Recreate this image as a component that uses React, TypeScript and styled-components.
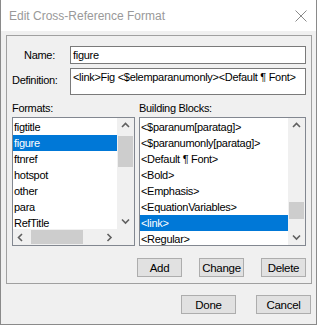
import React from "react";
import styled, { createGlobalStyle } from "styled-components";

const GlobalStyle = createGlobalStyle`
  html, body {
    margin: 0;
    padding: 0;
    background: #ffffff;
  }
  body {
    font-family: "Liberation Sans", Arial, sans-serif;
    font-size: 11px;
    letter-spacing: -0.3px;
    color: #000;
  }
`;

const formats = ["figtitle", "figure", "ftnref", "hotspot", "other", "para", "RefTitle"];
const blocks = [
  "<$paranum[paratag]>",
  "<$paranumonly[paratag]>",
  "<Default ¶ Font>",
  "<Bold>",
  "<Emphasis>",
  "<EquationVariables>",
  "<link>",
  "<Regular>"
];

const Window = styled.div`
  width: 317px;
  height: 325px;
  box-sizing: border-box;
  border: 1px solid #8a8a8a;
  border-top: none;
  display: flex;
  flex-direction: column;
  background: #f0f0f0;
`;

const TitleBar = styled.div`
  height: 31px;
  flex: none;
  background: #ffffff;
  display: flex;
  align-items: center;
  justify-content: space-between;
  padding: 0 9px 0 8px;
  font-size: 12px;
  letter-spacing: 0;
  color: #999999;
`;

const Body = styled.div`
  flex: 1;
  display: flex;
  flex-direction: column;
  padding: 4px 4px 0 5px;
`;

const GroupBox = styled.div`
  border: 1px solid #a0a0a0;
  height: 249px;
  box-sizing: border-box;
  padding: 10px 5px 0 5px;
  display: flex;
  flex-direction: column;
`;

const FieldRow = styled.div<{ $top?: number }>`
  display: flex;
  align-items: flex-start;
  margin-top: ${p => p.$top ?? 0}px;
`;

const FieldLabel = styled.div<{ $indent?: number }>`
  width: 58px;
  flex: none;
  box-sizing: border-box;
  padding-left: ${p => p.$indent ?? 0}px;
  line-height: 18px;
  padding-top: ${p => (p.$indent ? 0 : 3)}px;
`;

const TextBox = styled.div<{ $h: number }>`
  flex: 1;
  height: ${p => p.$h}px;
  box-sizing: border-box;
  border: 1px solid #7a7a7a;
  background: #ffffff;
  padding: 2px 0 0 2px;
  line-height: 13px;
  white-space: nowrap;
  overflow: hidden;
`;

const Lists = styled.div`
  display: grid;
  grid-template-columns: 123px 167px;
  column-gap: 4px;
  margin-top: 6px;
`;

const ListColumn = styled.div`
  display: flex;
  flex-direction: column;
`;

const ListCaption = styled.div`
  height: 16px;
  line-height: 14px;
`;

const ListBox = styled.div`
  height: 129px;
  box-sizing: border-box;
  border: 1px solid #828790;
  background: #ffffff;
  display: grid;
  grid-template-columns: 1fr 17px;
  grid-template-rows: 1fr auto;
  overflow: hidden;
`;

const Items = styled.div`
  padding-top: 1px;
  overflow: hidden;
`;

const Item = styled.div<{ $selected?: boolean }>`
  height: 16px;
  line-height: 16px;
  padding-left: 1px;
  white-space: nowrap;
  background: ${p => (p.$selected ? "#0078d7" : "transparent")};
  color: ${p => (p.$selected ? "#ffffff" : "#000000")};
`;

const VScroll = styled.div<{ $thumbTop: number; $thumbH: number }>`
  background: #f0f0f0;
  position: relative;
  display: flex;
  flex-direction: column;
  justify-content: space-between;
  align-items: center;
  padding: 4px 0;
  &::after {
    content: "";
    position: absolute;
    left: 1px;
    right: 1px;
    top: ${p => p.$thumbTop}px;
    height: ${p => p.$thumbH}px;
    background: #cdcdcd;
  }
`;

const HScroll = styled.div`
  grid-column: 1 / 2;
  height: 16px;
  background: #f0f0f0;
  position: relative;
  display: flex;
  justify-content: space-between;
  align-items: center;
  padding: 0 4px;
  &::after {
    content: "";
    position: absolute;
    left: 18px;
    width: 52px;
    top: 1px;
    bottom: 1px;
    background: #cdcdcd;
  }
`;

const Corner = styled.div`
  background: #f0f0f0;
`;

const ButtonRow = styled.div<{ $gap: number; $top: number }>`
  display: flex;
  justify-content: flex-end;
  gap: ${p => p.$gap}px;
  margin-top: ${p => p.$top}px;
`;

const Button = styled.div`
  width: 45px;
  height: 19px;
  box-sizing: border-box;
  border: 1px solid #adadad;
  background: #e1e1e1;
  font-size: 11.5px;
  display: flex;
  align-items: center;
  justify-content: center;
`;

const WideButton = styled(Button)`
  width: 55px;
`;

const Footer = styled(ButtonRow)`
  padding-right: 1px;
`;

const Chevron = ({ dir }: { dir: "up" | "down" | "left" | "right" }) => {
  const d = {
    up: "M1 5 L4.5 1.5 L8 5",
    down: "M1 1.5 L4.5 5 L8 1.5",
    left: "M5 1 L1.5 4.5 L5 8",
    right: "M1.5 1 L5 4.5 L1.5 8"
  }[dir];
  const w = dir === "up" || dir === "down" ? 9 : 7;
  const h = dir === "up" || dir === "down" ? 7 : 9;
  return (
    <svg width={w} height={h} viewBox={`0 0 ${w} ${h}`} style={{ position: "relative", zIndex: 1 }}>
      <path d={d} fill="none" stroke="#606060" strokeWidth="1.6" />
    </svg>
  );
};

export default function App() {
  return (
    <>
      <GlobalStyle />
      <Window>
        <TitleBar>
          <span>Edit Cross-Reference Format</span>
          <svg width="12" height="12" viewBox="0 0 12 12">
            <path d="M0.5 0.5 L11.5 11.5 M11.5 0.5 L0.5 11.5" stroke="#8a8a8a" strokeWidth="1" />
          </svg>
        </TitleBar>
        <Body>
          <GroupBox>
            <FieldRow>
              <FieldLabel $indent={12}>Name:</FieldLabel>
              <TextBox $h={18}>figure</TextBox>
            </FieldRow>
            <FieldRow $top={4}>
              <FieldLabel>Definition:</FieldLabel>
              <TextBox $h={27}>{"<link>Fig <$elemparanumonly><Default ¶ Font>"}</TextBox>
            </FieldRow>
            <Lists>
              <ListColumn>
                <ListCaption>Formats:</ListCaption>
                <ListBox>
                  <Items>
                    {formats.map(f => (
                      <Item key={f} $selected={f === "figure"}>
                        {f}
                      </Item>
                    ))}
                  </Items>
                  <VScroll $thumbTop={18} $thumbH={31}>
                    <Chevron dir="up" />
                    <Chevron dir="down" />
                  </VScroll>
                  <HScroll>
                    <Chevron dir="left" />
                    <Chevron dir="right" />
                  </HScroll>
                  <Corner />
                </ListBox>
              </ListColumn>
              <ListColumn>
                <ListCaption>Building Blocks:</ListCaption>
                <ListBox>
                  <Items>
                    {blocks.map(b => (
                      <Item key={b} $selected={b === "<link>"}>
                        {b}
                      </Item>
                    ))}
                  </Items>
                  <VScroll $thumbTop={84} $thumbH={17}>
                    <Chevron dir="up" />
                    <Chevron dir="down" />
                  </VScroll>
                </ListBox>
              </ListColumn>
            </Lists>
            <ButtonRow $gap={17} $top={12}>
              <Button>Add</Button>
              <Button>Change</Button>
              <Button>Delete</Button>
            </ButtonRow>
          </GroupBox>
          <Footer $gap={20} $top={11}>
            <WideButton>Done</WideButton>
            <WideButton>Cancel</WideButton>
          </Footer>
        </Body>
      </Window>
    </>
  );
}
